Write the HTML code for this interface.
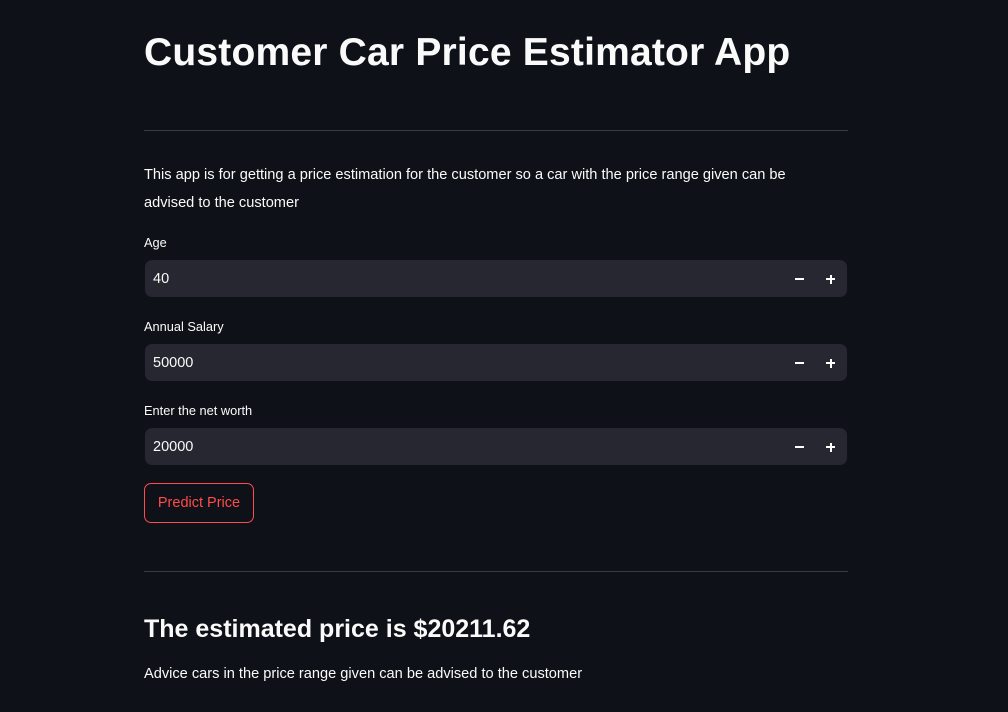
<!DOCTYPE html>
<html><head><style>
body{margin:0;background:#0e1117;width:1008px;height:712px;overflow:hidden;font-family:"Liberation Sans",sans-serif;color:#fafafa;position:relative}
.a{position:absolute;white-space:nowrap}
h1{position:absolute;left:144px;top:31px;margin:0;font-size:39px;font-weight:bold;letter-spacing:0.2px;white-space:nowrap}
.hr{position:absolute;left:144px;width:704px;height:1px;background:#3a3c44}
.p{font-size:14.6px;line-height:28px}
.lbl{font-size:12.8px}
.in{position:absolute;left:145px;width:702px;height:37px;background:#262730;border-radius:7px}
.in span{position:absolute;left:8px;top:11px;font-size:14.5px}
.m{position:absolute;left:650px;top:18px;width:9px;height:2px;background:#fff}
.pl1{position:absolute;left:681px;top:18px;width:9px;height:2px;background:#fff}
.pl2{position:absolute;left:684.5px;top:14.5px;width:2px;height:9px;background:#fff}
.btn{position:absolute;left:144px;top:483px;width:108px;height:38px;border:1px solid #ff4b4b;border-radius:7px;color:#ff4b4b;font-size:14.5px;text-align:center;line-height:38px}
</style></head><body>
<h1>Customer Car Price Estimator App</h1>
<div class="hr" style="top:130px"></div>
<div class="a p" style="left:144px;top:161px">This app is for getting a price estimation for the customer so a car with the price range given can be<br>advised to the customer</div>
<div class="a lbl" style="left:144px;top:235px">Age</div>
<div class="in" style="top:260px"><span>40</span><i class="m"></i><i class="pl1"></i><i class="pl2"></i></div>
<div class="a lbl" style="left:144px;top:319px">Annual Salary</div>
<div class="in" style="top:344px"><span>50000</span><i class="m"></i><i class="pl1"></i><i class="pl2"></i></div>
<div class="a lbl" style="left:144px;top:403px">Enter the net worth</div>
<div class="in" style="top:428px"><span>20000</span><i class="m"></i><i class="pl1"></i><i class="pl2"></i></div>
<div class="btn">Predict Price</div>
<div class="hr" style="top:571px"></div>
<div class="a" style="left:144px;top:615px;font-size:25px;font-weight:bold">The estimated price is $20211.62</div>
<div class="a p" style="left:144px;top:660px">Advice cars in the price range given can be advised to the customer</div>
</body></html>
